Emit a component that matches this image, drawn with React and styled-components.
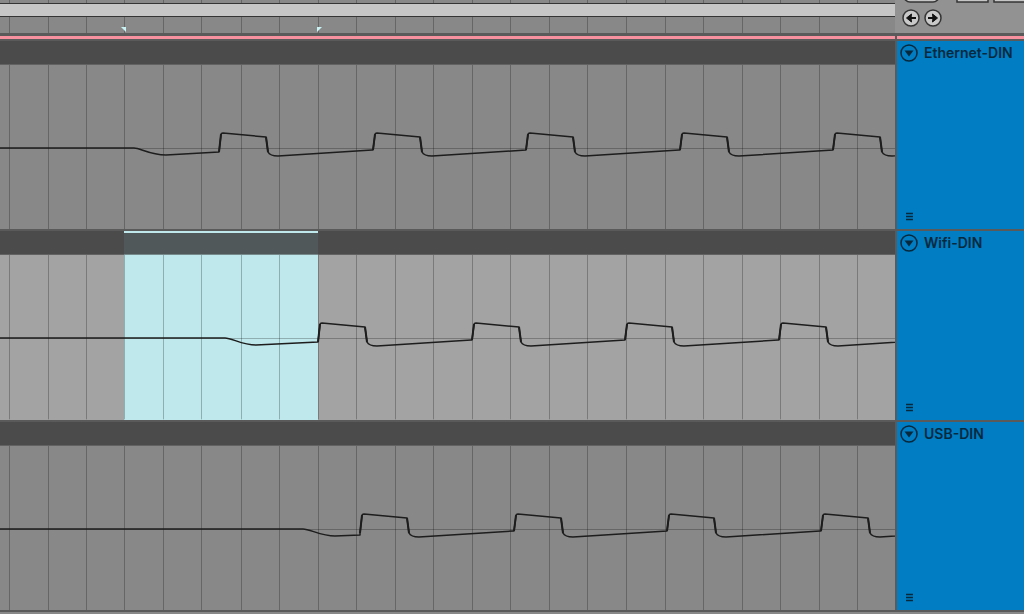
import styled, { createGlobalStyle } from "styled-components";

const GRID_LINES = [
  9, 48, 86, 124, 163, 201, 241, 279, 318, 356, 395, 433, 472, 510, 549, 587,
  626, 665, 703, 742, 780, 819, 857,
];

const ZERO = 83;

const TRACKS = [
  {
    name: "Ethernet-DIN",
    start: "M0 83H134C140 83 150 90 166 90L219 87",
    pulses: [219, 373, 526, 680, 833],
  },
  {
    name: "Wifi-DIN",
    selected: true,
    start: "M0 83H225C232 83 242 90 256 90L318 87",
    pulses: [318, 472, 625, 779],
  },
  {
    name: "USB-DIN",
    start: "M0 83H303C310 83 321 90 335 90L360 89",
    pulses: [360, 514, 667, 821],
  },
];

const GlobalStyle = createGlobalStyle`
  body {
    margin: 0;
    background: #5a5a5a;
    font-family: Inter, "Open Sans", sans-serif;
  }
`;

const Page = styled.main`
  min-height: 100vh;
  display: flex;
  flex-direction: column;
  overflow: hidden;
`;

const Row = styled.div`
  display: grid;
  grid-template-columns: minmax(0, 1fr) 129px;
`;

const Ruler = styled.div`
  position: relative;
  height: 33px;
  background: #888888;
  overflow: hidden;
`;

const ScrollBar = styled.div`
  position: relative;
  height: 12px;
  margin-top: 3px;
  border-top: 1px solid #343434;
  border-bottom: 1px solid #343434;
  background: #c6c6c6;
`;

const Overlay = styled.svg`
  position: absolute;
  inset: 0;
  width: 100%;
  height: 100%;
`;

const Corner = styled.div`
  position: relative;
  height: 33px;
  box-sizing: border-box;
  padding: 9px 0 0 7px;
  display: flex;
  gap: 4px;
  background: #929292;
  overflow: hidden;
`;

const ArrowButton = styled.button`
  width: 18px;
  height: 18px;
  padding: 0;
  border: 0;
  background: none;
  line-height: 0;
  cursor: pointer;
`;

const Marker = styled(Row)`
  padding: 3px 0 2px;
  column-gap: 2px;
  grid-template-columns: minmax(0, 1fr) 127px;
  background: #5a5a5a;
`;

const MarkerBar = styled.div`
  height: 3px;
  background: #f7919f;
`;

const TrackList = styled.div`
  flex: 1;
  display: grid;
  grid-auto-rows: minmax(190px, 1fr);
  border-bottom: 2px solid #888888;
`;

const Track = styled(Row)`
  border-bottom: 2px solid #5a5a5a;
`;

const Lane = styled.div`
  position: relative;
  display: flex;
  flex-direction: column;
  background: ${({ $selected }) => ($selected ? "#a3a3a3" : "#888888")};
`;

const ClipHeader = styled.div`
  height: 23px;
  background: #4b4b4b;
  border-bottom: 1px solid #626262;
`;

const Wave = styled.svg`
  position: relative;
  display: block;
  width: 100%;
  flex: 1;
  min-height: 163px;
`;

const Selection = styled.div`
  position: absolute;
  top: 0;
  bottom: 0;
  left: 124px;
  width: 194px;
  background: #bfe8ec;
`;

const SelectionHeader = styled.div`
  height: 21px;
  border-top: 2px solid #bfe8ec;
  border-bottom: 1px solid #76898b;
  background: #515859;
`;

const TrackPanel = styled.section`
  display: flex;
  flex-direction: column;
  justify-content: space-between;
  border-left: 2px solid #5a5a5a;
  background: #007dc3;
  color: #06293d;
`;

const TrackTitle = styled.header`
  display: flex;
  align-items: center;
  gap: 5px;
  padding: 2px 0 0 2px;
`;

const FoldButton = styled(ArrowButton)`
  width: 20px;
  height: 20px;
`;

const TrackName = styled.h2`
  margin: 0;
  font-size: 14px;
  font-weight: 600;
  line-height: 20px;
  white-space: nowrap;
`;

const MenuButton = styled.button`
  width: 9px;
  height: 9px;
  margin: 0 0 8px 8px;
  padding: 0;
  border: 0;
  background: none;
  line-height: 0;
  cursor: pointer;
`;

const TOP = ZERO - 15;

// the first pulse of a track rises from a lower point than the ones after it
const pulseFoot = (i) => ZERO + (i === 0 ? 4 : 2);

const pulsePath = (x, i) =>
  `L${x} ${pulseFoot(i)}L${x + 2} ${TOP + 2}Q${x + 2} ${TOP} ${x + 4} ${TOP}L${x + 47} ${
    TOP + 4
  }L${x + 49} ${ZERO + 4}Q${x + 51} ${ZERO + 8} ${x + 59} ${ZERO + 8}L${x + 153} ${
    ZERO + 2
  }`;

const edgePath = (x, i) =>
  `M${x} ${pulseFoot(i)}L${x + 2} ${TOP + 1}M${x + 47} ${TOP + 4}L${x + 49} ${ZERO + 4}`;

const GridLines = () =>
  GRID_LINES.map((x) => (
    <line
      key={x}
      x1={x + 0.5}
      x2={x + 0.5}
      y1="0"
      y2="100%"
      stroke="#000"
      strokeOpacity="0.25"
    />
  ));

const Arrow = ({ left }) => (
  <svg width="18" height="18" viewBox="0 0 18 18">
    <circle cx="9" cy="9" r="8" fill="#c9c9c9" stroke="#343434" strokeWidth="1.5" />
    <g transform={left ? "rotate(180 9 9)" : undefined} fill="#111" stroke="#111">
      <path d="M4 9H10" strokeWidth="2" />
      <path d="M8.5 5L13.5 9L8.5 13L9 9Z" strokeWidth="1" />
    </g>
  </svg>
);

const TrackRow = ({ track }) => (
  <Track>
    <Lane $selected={track.selected}>
      <ClipHeader />
      {track.selected && (
        <Selection>
          <SelectionHeader />
        </Selection>
      )}
      <Wave>
        <GridLines />
        <path d={`M0 ${ZERO + 0.5}H4000`} stroke="#000" strokeOpacity="0.25" />
        <g fill="none" stroke="#1d1d1d" strokeLinejoin="round">
          <path d={track.start + track.pulses.map(pulsePath).join("")} strokeWidth="1.5" />
          <path d={track.pulses.map(edgePath).join("")} strokeWidth="2" />
        </g>
      </Wave>
    </Lane>
    <TrackPanel>
      <TrackTitle>
        <FoldButton aria-label={`Fold ${track.name}`}>
          <svg width="20" height="20" viewBox="0 0 20 20">
            <circle cx="10" cy="10" r="8" fill="none" stroke="#06293d" strokeWidth="1.5" />
            <path d="M5.5 7.5H14.5L10 13.5Z" fill="#06293d" />
          </svg>
        </FoldButton>
        <TrackName>{track.name}</TrackName>
      </TrackTitle>
      <MenuButton aria-label={`${track.name} lanes`}>
        <svg width="9" height="9" viewBox="0 0 9 9">
          <path d="M1 1.5H8M1 4.5H8M1 7.5H8" stroke="#06293d" strokeWidth="1.3" />
        </svg>
      </MenuButton>
    </TrackPanel>
  </Track>
);

const App = () => {
  return (
    <>
      <GlobalStyle />
      <Page>
        <Row>
          <Ruler>
            <Overlay>
              <GridLines />
            </Overlay>
            <ScrollBar />
            <Overlay>
              <path d="M121 27H126V32Z" fill="#c9f2f5" />
              <path d="M317 27H322L317 32Z" fill="#c9f2f5" />
            </Overlay>
          </Ruler>
          <Corner>
            <Overlay>
              <g fill="#c6c6c6" stroke="#343434" strokeWidth="1.5">
                <rect x="9" y="-12" width="35" height="14" rx="6" />
                <rect x="62" y="-12" width="31" height="14" />
                <rect x="99" y="-12" width="40" height="14" />
              </g>
            </Overlay>
            <ArrowButton aria-label="Previous locator">
              <Arrow left />
            </ArrowButton>
            <ArrowButton aria-label="Next locator">
              <Arrow />
            </ArrowButton>
          </Corner>
        </Row>
        <Marker>
          <MarkerBar />
          <MarkerBar />
        </Marker>
        <TrackList>
          {TRACKS.map((track) => (
            <TrackRow key={track.name} track={track} />
          ))}
        </TrackList>
      </Page>
    </>
  );
};

export default App;
